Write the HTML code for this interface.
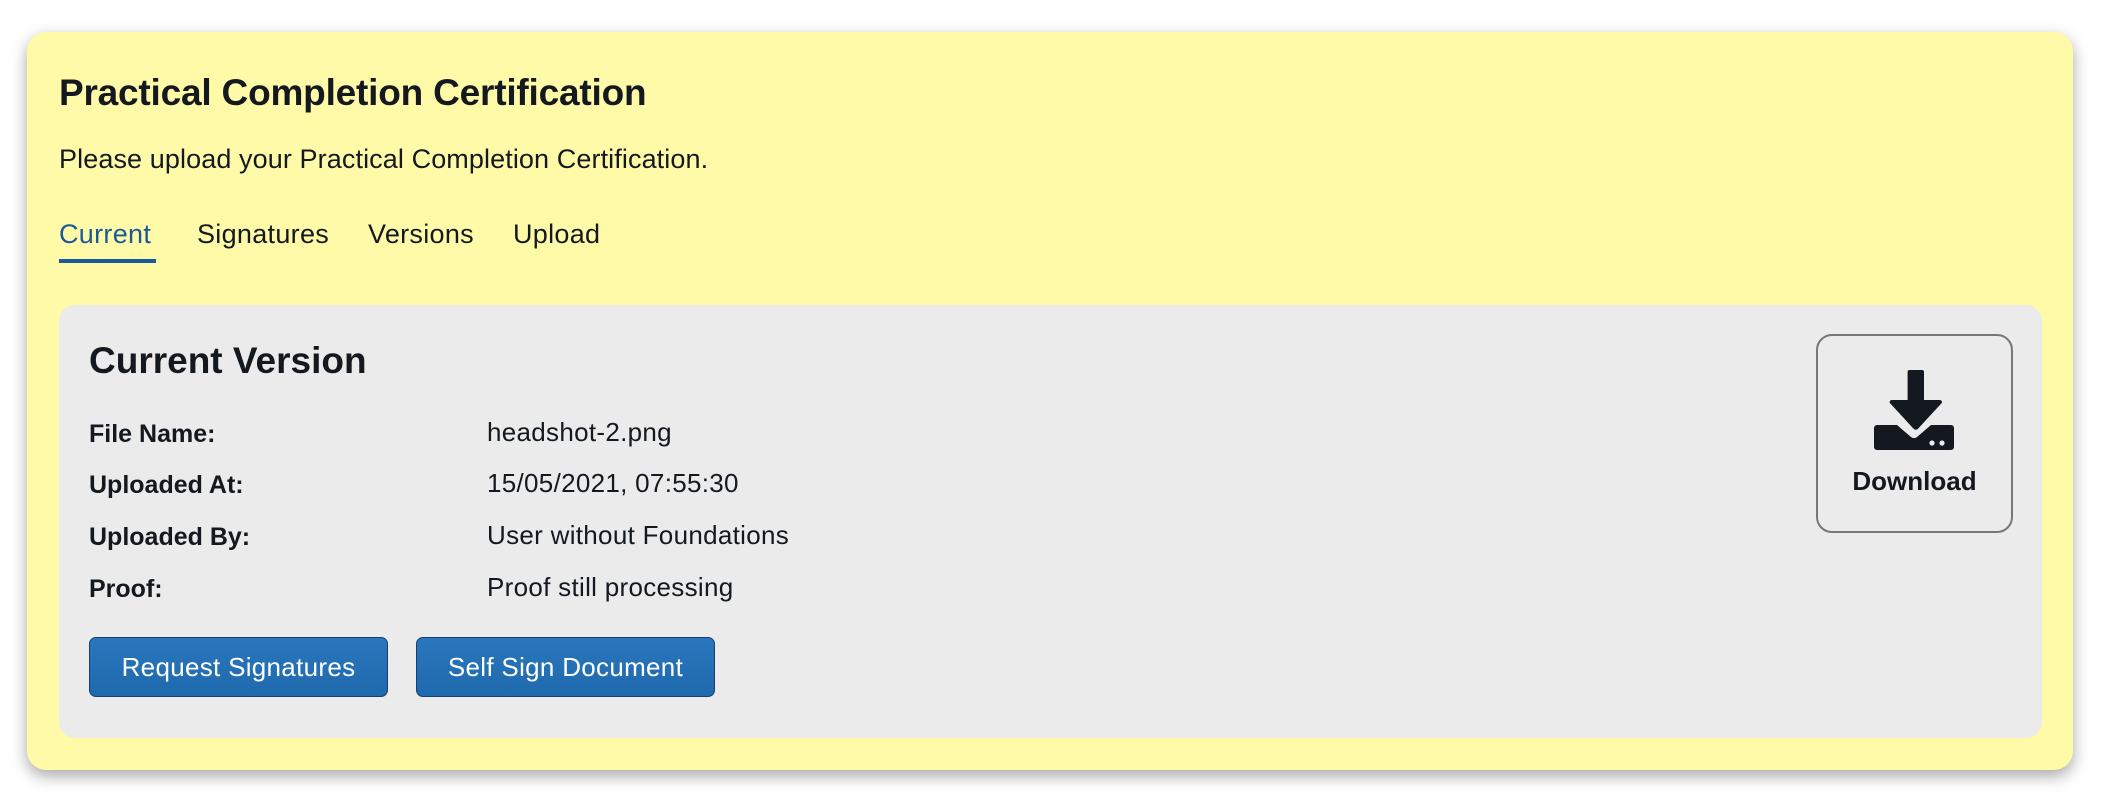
<!DOCTYPE html>
<html><head><style>
*{margin:0;padding:0;box-sizing:border-box}
body{width:2104px;height:802px;background:#fff;font-family:"Liberation Sans",sans-serif;color:#14191f;position:relative;overflow:hidden}
.card{position:absolute;left:27px;top:32px;width:2046px;height:738px;background:#fffaa8;border-radius:19px;box-shadow:0 6px 16px rgba(0,0,0,.35)}
.a{position:absolute;white-space:nowrap}
.title{left:59px;top:72px;font-size:37px;font-weight:bold;letter-spacing:-0.2px}
.sub{left:59px;top:144px;font-size:27px;letter-spacing:0.1px}
.tab{top:219px;font-size:27px;letter-spacing:0.3px}
.ul{position:absolute;left:59px;top:259px;width:97px;height:4px;background:#1a5a98}
.panel{position:absolute;left:59px;top:305px;width:1983px;height:433px;background:#ebebeb;border-radius:16px}
.h2{left:89px;top:340px;font-size:37px;font-weight:bold;letter-spacing:0px}
.lab{left:89px;font-size:25px;font-weight:bold;letter-spacing:0px}
.val{left:487px;font-size:26px;letter-spacing:0.3px}
.btn{position:absolute;top:637px;height:60px;background:linear-gradient(#2a77bd,#1f69ad);border:1.5px solid #163f6e;border-radius:7px;color:#fff;font-size:26px;letter-spacing:0.3px;display:flex;align-items:center;justify-content:center}
.dl{position:absolute;left:1816px;top:334px;width:197px;height:199px;border:2px solid #777;border-radius:16px}
</style></head><body>
<div class="card"></div>
<div class="a title">Practical Completion Certification</div>
<div class="a sub">Please upload your Practical Completion Certification.</div>
<div class="a tab" style="left:59px;color:#1a5a98">Current</div>
<div class="a tab" style="left:197px">Signatures</div>
<div class="a tab" style="left:368px">Versions</div>
<div class="a tab" style="left:513px">Upload</div>
<div class="ul"></div>
<div class="panel"></div>
<div class="a h2">Current Version</div>
<div class="a lab" style="top:420px">File Name:</div><div class="a val" style="top:417px">headshot-2.png</div>
<div class="a lab" style="top:471px">Uploaded At:</div><div class="a val" style="top:468px">15/05/2021, 07:55:30</div>
<div class="a lab" style="top:523px">Uploaded By:</div><div class="a val" style="top:520px">User without Foundations</div>
<div class="a lab" style="top:575px">Proof:</div><div class="a val" style="top:572px">Proof still processing</div>
<div class="btn" style="left:89px;width:299px">Request Signatures</div>
<div class="btn" style="left:416px;width:299px">Self Sign Document</div>
<div class="dl"></div>
<svg style="position:absolute;left:1870px;top:366px" width="90" height="90" viewBox="1870 366 90 90">
<path fill="#14191f" d="M1906 370h16a2 2 0 0 1 2 2v28h16a2 2 0 0 1 1.4 3.4l-23.5 25.5a3 3 0 0 1-4.2 0l-23.5-25.5a2 2 0 0 1 1.4-3.4h16v-28a2 2 0 0 1 2-2z"/>
<path fill="#14191f" d="M1877 425h20l14 12a5 5 0 0 0 6 0l14-12h20a3 3 0 0 1 3 3v19a3 3 0 0 1-3 3h-74a3 3 0 0 1-3-3v-19a3 3 0 0 1 3-3z"/>
<circle cx="1932" cy="443" r="2.6" fill="#ebebeb"/><circle cx="1942" cy="443" r="2.6" fill="#ebebeb"/>
</svg>
<div class="a" style="left:1816px;width:197px;text-align:center;top:466px;font-size:26px;font-weight:bold;letter-spacing:0px">Download</div>
</body></html>
